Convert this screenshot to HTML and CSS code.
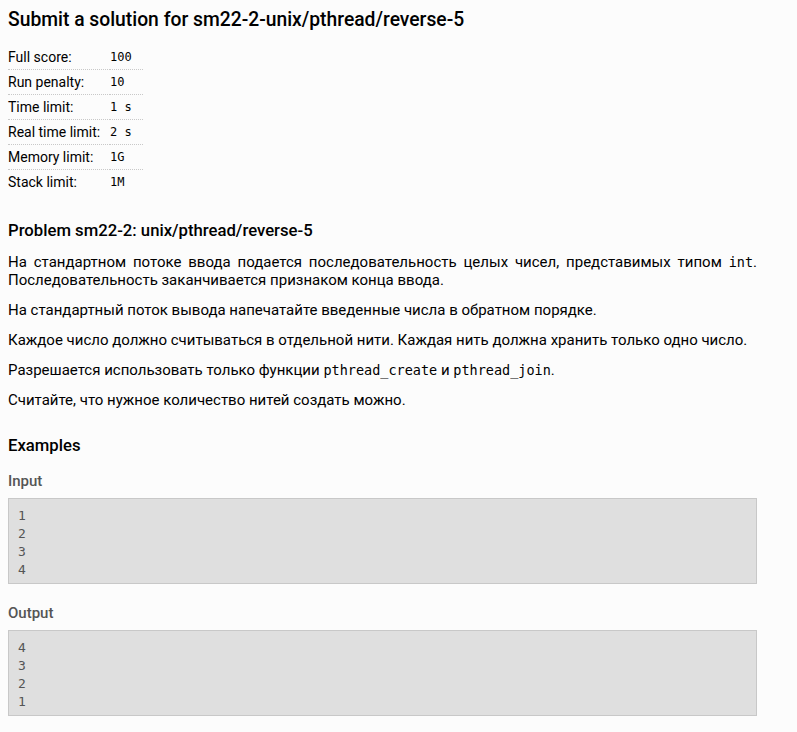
FILE: index.html
```html
<!DOCTYPE html>
<html>
<head>
<meta charset="utf-8">
<link rel="stylesheet" href="styles.css">
</head>
<body>
<div class="page">
  <h1 class="title">Submit a solution for sm22-2-unix/pthread/reverse-5</h1>
  <table class="limits">
    <tr><td class="lbl">Full score:</td><td class="val">100</td></tr>
    <tr><td class="lbl">Run penalty:</td><td class="val">10</td></tr>
    <tr><td class="lbl">Time limit:</td><td class="val">1 s</td></tr>
    <tr><td class="lbl">Real time limit:</td><td class="val">2 s</td></tr>
    <tr><td class="lbl">Memory limit:</td><td class="val">1G</td></tr>
    <tr class="last"><td class="lbl">Stack limit:</td><td class="val">1M</td></tr>
  </table>
  <h2 class="problem">Problem sm22-2: unix/pthread/reverse-5</h2>
  <div class="statement">
    <p>На стандартном потоке ввода подается последовательность целых чисел, представимых типом <code>int</code>. Последовательность заканчивается признаком конца ввода.</p>
    <p>На стандартный поток вывода напечатайте введенные числа в обратном порядке.</p>
    <p>Каждое число должно считываться в отдельной нити. Каждая нить должна хранить только одно число.</p>
    <p>Разрешается использовать только функции <code>pthread_create</code> и <code>pthread_join</code>.</p>
    <p>Считайте, что нужное количество нитей создать можно.</p>
  </div>
  <h2 class="examples">Examples</h2>
  <h3 class="io">Input</h3>
  <pre class="sample">1
2
3
4</pre>
  <h3 class="io">Output</h3>
  <pre class="sample">4
3
2
1</pre>
</div>
</body>
</html>
```
FILE: styles.css
```css
html, body {
  margin: 0;
  padding: 0;
  background: #fcfcfc;
}
body {
  padding: 8px;
  font-family: Roboto, "Noto Sans", sans-serif;
  font-size: 14px;
  color: #000;
}
.page {
  width: 749px;
}
.title {
  font-size: 19.3px;
  font-weight: 500;
  margin: 0 0 13px 0;
  line-height: 24px;
}
.limits {
  border-collapse: collapse;
  margin: 0;
}
.limits td {
  padding: 0;
  height: 24px;
  border-bottom: 1px dotted #c8c8c8;
  vertical-align: middle;
}
.limits tr.last td {
  border-bottom: none;
}
.lbl {
  width: 102px;
  font-weight: 400;
  font-size: 14px;
}
.val {
  width: 33px;
  font-family: "DejaVu Sans Mono", monospace;
  font-size: 12px;
}
.problem {
  font-size: 16.7px;
  font-weight: 500;
  margin: 26px 0 11px 0;
  line-height: 22px;
}
.statement p {
  margin: 0 0 12px 0;
  line-height: 18px;
  font-size: 15px;
  text-align: justify;
}
code {
  font-family: "DejaVu Sans Mono", monospace;
  font-size: 13.5px;
}
.examples {
  font-size: 16.7px;
  font-weight: 500;
  margin: 26px 0 14px 0;
  line-height: 22px;
}
.io {
  font-size: 15px;
  font-weight: 500;
  color: #555;
  margin: 0 0 7px 0;
  line-height: 20px;
}
.sample {
  background: #dfdfdf;
  border: 1px solid #c8c8c8;
  margin: 0 0 19px 0;
  padding: 8px 9px 4px 9px;
  font-family: "DejaVu Sans Mono", monospace;
  font-size: 13px;
  line-height: 18px;
  color: #555;
}
```
